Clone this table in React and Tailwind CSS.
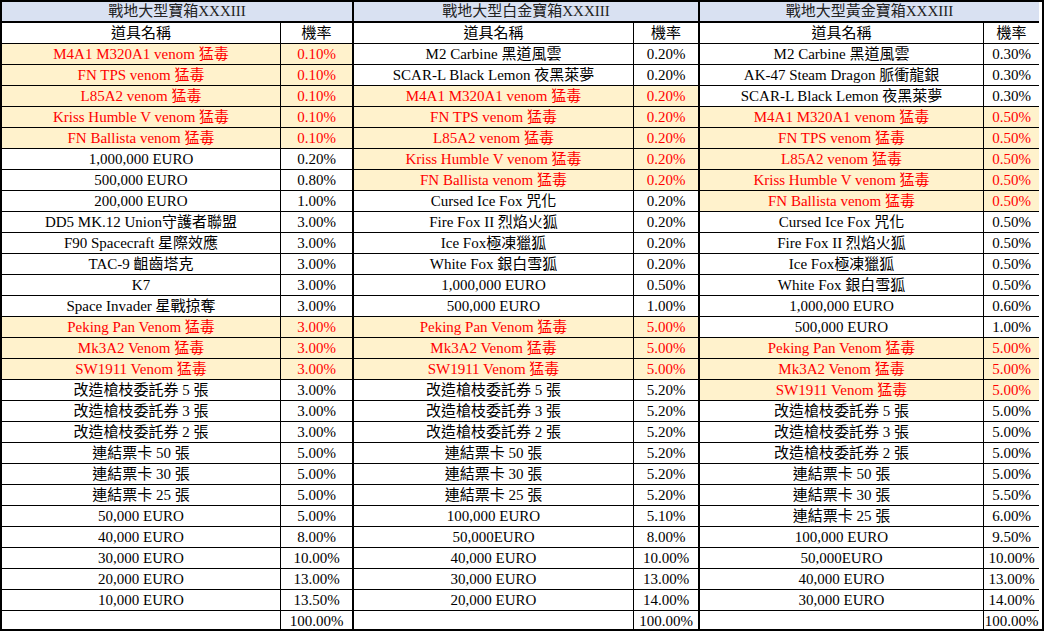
const boxes = [
  {
    title: "戰地大型寶箱XXXIII",
    nameW: "w-[279px]",
    rateW: "w-[71px]",
    items: [
      ["M4A1 M320A1 venom 猛毒", "0.10%"],
      ["FN TPS venom 猛毒", "0.10%"],
      ["L85A2 venom 猛毒", "0.10%"],
      ["Kriss Humble V venom 猛毒", "0.10%"],
      ["FN Ballista venom 猛毒", "0.10%"],
      ["1,000,000 EURO", "0.20%"],
      ["500,000 EURO", "0.80%"],
      ["200,000 EURO", "1.00%"],
      ["DD5 MK.12 Union守護者聯盟", "3.00%"],
      ["F90 Spacecraft 星際效應", "3.00%"],
      ["TAC-9 齟齒塔克", "3.00%"],
      ["K7", "3.00%"],
      ["Space Invader 星戰掠奪", "3.00%"],
      ["Peking Pan Venom 猛毒", "3.00%"],
      ["Mk3A2 Venom 猛毒", "3.00%"],
      ["SW1911 Venom 猛毒", "3.00%"],
      ["改造槍枝委託券 5 張", "3.00%"],
      ["改造槍枝委託券 3 張", "3.00%"],
      ["改造槍枝委託券 2 張", "3.00%"],
      ["連結票卡 50 張", "5.00%"],
      ["連結票卡 30 張", "5.00%"],
      ["連結票卡 25 張", "5.00%"],
      ["50,000 EURO", "5.00%"],
      ["40,000 EURO", "8.00%"],
      ["30,000 EURO", "10.00%"],
      ["20,000 EURO", "13.00%"],
      ["10,000 EURO", "13.50%"],
    ],
  },
  {
    title: "戰地大型白金寶箱XXXIII",
    nameW: "w-[280px]",
    rateW: "w-[64px]",
    items: [
      ["M2 Carbine 黑道風雲", "0.20%"],
      ["SCAR-L Black Lemon 夜黑萊夢", "0.20%"],
      ["M4A1 M320A1 venom 猛毒", "0.20%"],
      ["FN TPS venom 猛毒", "0.20%"],
      ["L85A2 venom 猛毒", "0.20%"],
      ["Kriss Humble V venom 猛毒", "0.20%"],
      ["FN Ballista venom 猛毒", "0.20%"],
      ["Cursed Ice Fox 咒化", "0.20%"],
      ["Fire Fox II 烈焰火狐", "0.20%"],
      ["Ice Fox極凍獵狐", "0.20%"],
      ["White Fox 銀白雪狐", "0.20%"],
      ["1,000,000 EURO", "0.50%"],
      ["500,000 EURO", "1.00%"],
      ["Peking Pan Venom 猛毒", "5.00%"],
      ["Mk3A2 Venom 猛毒", "5.00%"],
      ["SW1911 Venom 猛毒", "5.00%"],
      ["改造槍枝委託券 5 張", "5.20%"],
      ["改造槍枝委託券 3 張", "5.20%"],
      ["改造槍枝委託券 2 張", "5.20%"],
      ["連結票卡 50 張", "5.20%"],
      ["連結票卡 30 張", "5.20%"],
      ["連結票卡 25 張", "5.20%"],
      ["100,000 EURO", "5.10%"],
      ["50,000EURO", "8.00%"],
      ["40,000 EURO", "10.00%"],
      ["30,000 EURO", "13.00%"],
      ["20,000 EURO", "14.00%"],
    ],
  },
  {
    title: "戰地大型黃金寶箱XXXIII",
    nameW: "w-[284px]",
    rateW: "w-[55px]",
    items: [
      ["M2 Carbine 黑道風雲", "0.30%"],
      ["AK-47 Steam Dragon 脈衝龍銀", "0.30%"],
      ["SCAR-L Black Lemon 夜黑萊夢", "0.30%"],
      ["M4A1 M320A1 venom 猛毒", "0.50%"],
      ["FN TPS venom 猛毒", "0.50%"],
      ["L85A2 venom 猛毒", "0.50%"],
      ["Kriss Humble V venom 猛毒", "0.50%"],
      ["FN Ballista venom 猛毒", "0.50%"],
      ["Cursed Ice Fox 咒化", "0.50%"],
      ["Fire Fox II 烈焰火狐", "0.50%"],
      ["Ice Fox極凍獵狐", "0.50%"],
      ["White Fox 銀白雪狐", "0.50%"],
      ["1,000,000 EURO", "0.60%"],
      ["500,000 EURO", "1.00%"],
      ["Peking Pan Venom 猛毒", "5.00%"],
      ["Mk3A2 Venom 猛毒", "5.00%"],
      ["SW1911 Venom 猛毒", "5.00%"],
      ["改造槍枝委託券 5 張", "5.00%"],
      ["改造槍枝委託券 3 張", "5.00%"],
      ["改造槍枝委託券 2 張", "5.00%"],
      ["連結票卡 50 張", "5.00%"],
      ["連結票卡 30 張", "5.50%"],
      ["連結票卡 25 張", "6.00%"],
      ["100,000 EURO", "9.50%"],
      ["50,000EURO", "10.00%"],
      ["40,000 EURO", "13.00%"],
      ["30,000 EURO", "14.00%"],
    ],
  },
];

// each row: 1px top rule + 20px cell
function Row({ name, rate, nameW, rateW, hl, h = "h-[21px]" }) {
  return (
    <div className={`flex border-t border-black ${h} ${hl ? "bg-[#fff2cc] text-[#ff0000]" : "bg-white text-black"}`}>
      <div className={`${nameW} shrink-0 border-r border-black text-center whitespace-nowrap overflow-hidden`}>
        {name}
      </div>
      <div className={`${rateW} shrink-0 text-center whitespace-nowrap`}>{rate}</div>
    </div>
  );
}

function DropBox({ box, first }) {
  return (
    <div className={`flex flex-col ${first ? "" : "border-l-2 border-black"}`}>
      <div className="h-[21px] bg-[#d9e1f2] text-center leading-[19px] text-[#222] border-b-2 border-black">
        {box.title}
      </div>
      <div className="flex h-[20px] bg-white">
        <div className={`${box.nameW} shrink-0 border-r border-black text-center`}>道具名稱</div>
        <div className={`${box.rateW} shrink-0 text-center`}>機率</div>
      </div>
      {box.items.map(([name, rate], i) => (
        <Row key={i} name={name} rate={rate} nameW={box.nameW} rateW={box.rateW} hl={/venom/i.test(name)} />
      ))}
      <Row name="" rate="100.00%" nameW={box.nameW} rateW={box.rateW} h="h-[19px]" />
    </div>
  );
}

export default function App() {
  return (
    <div
      className="w-[1044px] h-[631px] bg-white text-[15px] leading-[20px]"
      style={{ fontFamily: '"Liberation Serif", "Noto Sans CJK TC", serif' }}
    >
      <div className="flex border-2 border-black w-[1044px]">
        {boxes.map((b, i) => (
          <DropBox key={b.title} box={b} first={i === 0} />
        ))}
      </div>
    </div>
  );
}
